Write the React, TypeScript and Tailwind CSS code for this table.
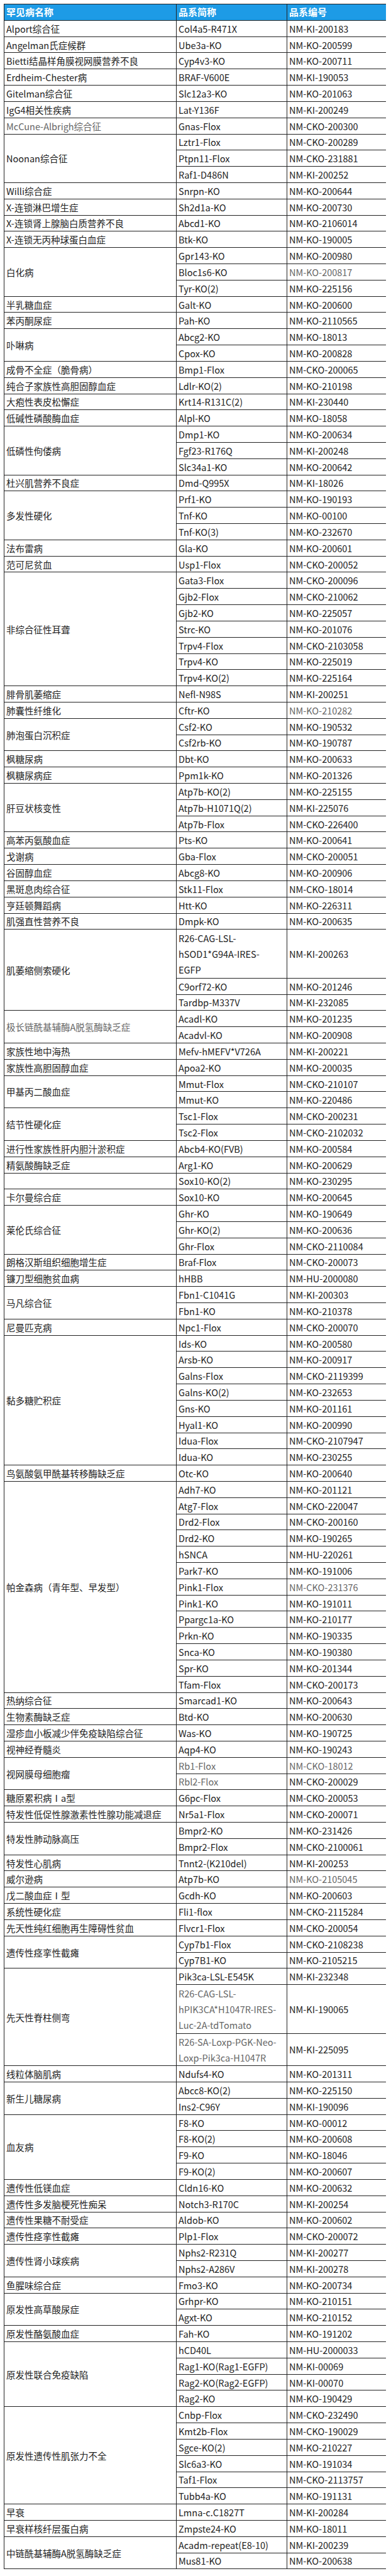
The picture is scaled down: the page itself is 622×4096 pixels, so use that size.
import React from "react";

// "~" at the start of a text marks the lighter grey print seen in the source sheet
type Strain = [string, string, number?];
type Group = { name: string; items: Strain[] };

const groups: Group[] = [
  { name: "Alport综合征", items: [["Col4a5-R471X", "NM-KI-200183"]] },
  { name: "Angelman氏症候群", items: [["Ube3a-KO", "NM-KO-200599"]] },
  { name: "Bietti结晶样角膜视网膜营养不良", items: [["Cyp4v3-KO", "NM-KO-200711"]] },
  { name: "Erdheim-Chester病", items: [["BRAF-V600E", "NM-KI-190053"]] },
  { name: "Gitelman综合征", items: [["Slc12a3-KO", "NM-KO-201063"]] },
  { name: "IgG4相关性疾病", items: [["Lat-Y136F", "NM-KI-200249"]] },
  { name: "~McCune-Albrigh综合征", items: [["Gnas-Flox", "NM-CKO-200300"]] },
  {
    name: "Noonan综合征",
    items: [
      ["Lztr1-Flox", "NM-CKO-200289"],
      ["Ptpn11-Flox", "NM-CKO-231881"],
      ["Raf1-D486N", "NM-KI-200252"],
    ],
  },
  { name: "Willi综合症", items: [["Snrpn-KO", "NM-KO-200644"]] },
  { name: "X-连锁淋巴增生症", items: [["Sh2d1a-KO", "NM-KO-200730"]] },
  { name: "X-连锁肾上腺脑白质营养不良", items: [["Abcd1-KO", "NM-KO-2106014"]] },
  { name: "X-连锁无丙种球蛋白血症", items: [["Btk-KO", "NM-KO-190005"]] },
  {
    name: "白化病",
    items: [
      ["Gpr143-KO", "NM-KO-200980"],
      ["Bloc1s6-KO", "~NM-KO-200817"],
      ["Tyr-KO(2)", "NM-KO-225156"],
    ],
  },
  { name: "半乳糖血症", items: [["Galt-KO", "NM-KO-200600"]] },
  { name: "苯丙酮尿症", items: [["Pah-KO", "NM-KO-2110565"]] },
  {
    name: "卟啉病",
    items: [
      ["Abcg2-KO", "NM-KO-18013"],
      ["Cpox-KO", "NM-KO-200828"],
    ],
  },
  { name: "成骨不全症（脆骨病）", items: [["Bmp1-Flox", "NM-CKO-200065"]] },
  { name: "纯合子家族性高胆固醇血症", items: [["Ldlr-KO(2)", "NM-KO-210198"]] },
  { name: "大疱性表皮松懈症", items: [["Krt14-R131C(2)", "NM-KI-230440"]] },
  { name: "低碱性磷酸酶血症", items: [["Alpl-KO", "NM-KO-18058"]] },
  {
    name: "低磷性佝偻病",
    items: [
      ["Dmp1-KO", "NM-KO-200634"],
      ["Fgf23-R176Q", "NM-KI-200248"],
      ["Slc34a1-KO", "NM-KO-200642"],
    ],
  },
  { name: "杜兴肌营养不良症", items: [["Dmd-Q995X", "NM-KI-18026"]] },
  {
    name: "多发性硬化",
    items: [
      ["Prf1-KO", "NM-KO-190193"],
      ["Tnf-KO", "NM-KO-00100"],
      ["Tnf-KO(3)", "NM-KO-232670"],
    ],
  },
  { name: "法布雷病", items: [["Gla-KO", "NM-KO-200601"]] },
  { name: "范可尼贫血", items: [["Usp1-Flox", "NM-CKO-200052"]] },
  {
    name: "非综合征性耳聋",
    items: [
      ["Gata3-Flox", "NM-CKO-200096"],
      ["Gjb2-Flox", "NM-CKO-210062"],
      ["Gjb2-KO", "NM-KO-225057"],
      ["Strc-KO", "NM-KO-201076"],
      ["Trpv4-Flox", "NM-CKO-2103058"],
      ["Trpv4-KO", "NM-KO-225019"],
      ["Trpv4-KO(2)", "NM-KO-225164"],
    ],
  },
  { name: "腓骨肌萎缩症", items: [["Nefl-N98S", "NM-KI-200251"]] },
  { name: "肺囊性纤维化", items: [["Cftr-KO", "~NM-KO-210282"]] },
  {
    name: "肺泡蛋白沉积症",
    items: [
      ["Csf2-KO", "NM-KO-190532"],
      ["Csf2rb-KO", "NM-KO-190787"],
    ],
  },
  { name: "枫糖尿病", items: [["Dbt-KO", "NM-KO-200633"]] },
  { name: "枫糖尿病症", items: [["Ppm1k-KO", "NM-KO-201326"]] },
  {
    name: "肝豆状核变性",
    items: [
      ["Atp7b-KO(2)", "NM-KO-225155"],
      ["Atp7b-H1071Q(2)", "NM-KI-225076"],
      ["Atp7b-Flox", "NM-CKO-226400"],
    ],
  },
  { name: "高苯丙氨酸血症", items: [["Pts-KO", "NM-KO-200641"]] },
  { name: "戈谢病", items: [["Gba-Flox", "NM-CKO-200051"]] },
  { name: "谷固醇血症", items: [["Abcg8-KO", "NM-KO-200906"]] },
  { name: "黑斑息肉综合征", items: [["Stk11-Flox", "NM-CKO-18014"]] },
  { name: "亨廷顿舞蹈病", items: [["Htt-KO", "NM-KO-226311"]] },
  { name: "肌强直性营养不良", items: [["Dmpk-KO", "NM-KO-200635"]] },
  {
    name: "肌萎缩侧索硬化",
    items: [
      ["R26-CAG-LSL-\nhSOD1*G94A-IRES-\nEGFP", "NM-KI-200263", 3],
      ["C9orf72-KO", "NM-KO-201246"],
      ["Tardbp-M337V", "NM-KI-232085"],
    ],
  },
  {
    name: "~极长链酰基辅酶A脱氢酶缺乏症",
    items: [
      ["Acadl-KO", "NM-KO-201235"],
      ["Acadvl-KO", "NM-KO-200908"],
    ],
  },
  { name: "家族性地中海热", items: [["Mefv-hMEFV*V726A", "NM-KI-200221"]] },
  { name: "家族性高胆固醇血症", items: [["Apoa2-KO", "NM-KO-200035"]] },
  {
    name: "甲基丙二酸血症",
    items: [
      ["Mmut-Flox", "NM-CKO-210107"],
      ["Mmut-KO", "NM-KO-220486"],
    ],
  },
  {
    name: "结节性硬化症",
    items: [
      ["Tsc1-Flox", "NM-CKO-200231"],
      ["Tsc2-Flox", "NM-CKO-2102032"],
    ],
  },
  { name: "进行性家族性肝内胆汁淤积症", items: [["Abcb4-KO(FVB)", "NM-KO-200584"]] },
  { name: "精氨酸酶缺乏症", items: [["Arg1-KO", "NM-KO-200629"]] },
  { name: "", items: [["Sox10-KO(2)", "NM-KO-230295"]] },
  { name: "卡尔曼综合症", items: [["Sox10-KO", "NM-KO-200645"]] },
  {
    name: "莱伦氏综合征",
    items: [
      ["Ghr-KO", "NM-KO-190649"],
      ["Ghr-KO(2)", "NM-KO-200636"],
      ["Ghr-Flox", "NM-CKO-2110084"],
    ],
  },
  { name: "朗格汉斯组织细胞增生症", items: [["Braf-Flox", "NM-CKO-200073"]] },
  { name: "镰刀型细胞贫血病", items: [["hHBB", "NM-HU-2000080"]] },
  {
    name: "马凡综合征",
    items: [
      ["Fbn1-C1041G", "NM-KI-200303"],
      ["Fbn1-KO", "NM-KO-210378"],
    ],
  },
  { name: "尼曼匹克病", items: [["Npc1-Flox", "NM-CKO-200070"]] },
  {
    name: "黏多糖贮积症",
    items: [
      ["Ids-KO", "NM-KO-200580"],
      ["Arsb-KO", "NM-KO-200917"],
      ["Galns-Flox", "NM-CKO-2119399"],
      ["Galns-KO(2)", "NM-KO-232653"],
      ["Gns-KO", "NM-KO-201161"],
      ["Hyal1-KO", "NM-KO-200990"],
      ["Idua-Flox", "NM-CKO-2107947"],
      ["Idua-KO", "NM-KO-230255"],
    ],
  },
  { name: "鸟氨酸氨甲酰基转移酶缺乏症", items: [["Otc-KO", "NM-KO-200640"]] },
  {
    name: "帕金森病（青年型、早发型）",
    items: [
      ["Adh7-KO", "NM-KO-201121"],
      ["Atg7-Flox", "NM-CKO-220047"],
      ["Drd2-Flox", "NM-CKO-200160"],
      ["Drd2-KO", "NM-KO-190265"],
      ["hSNCA", "NM-HU-220261"],
      ["Park7-KO", "NM-KO-191006"],
      ["Pink1-Flox", "~NM-CKO-231376"],
      ["Pink1-KO", "NM-KO-191011"],
      ["Ppargc1a-KO", "NM-KO-210177"],
      ["Prkn-KO", "NM-KO-190335"],
      ["Snca-KO", "NM-KO-190380"],
      ["Spr-KO", "NM-KO-201344"],
      ["Tfam-Flox", "NM-CKO-200173"],
    ],
  },
  { name: "热纳综合征", items: [["Smarcad1-KO", "NM-KO-200643"]] },
  { name: "生物素酶缺乏症", items: [["Btd-KO", "NM-KO-200630"]] },
  { name: "湿疹血小板减少伴免疫缺陷综合征", items: [["Was-KO", "NM-KO-190725"]] },
  { name: "视神经脊髓炎", items: [["Aqp4-KO", "NM-KO-190243"]] },
  {
    name: "视网膜母细胞瘤",
    items: [
      ["~Rb1-Flox", "~NM-CKO-18012"],
      ["~Rbl2-Flox", "NM-CKO-200029"],
    ],
  },
  { name: "糖原累积病Ⅰa型", items: [["G6pc-Flox", "NM-CKO-200053"]] },
  { name: "特发性低促性腺激素性性腺功能减退症", items: [["Nr5a1-Flox", "NM-CKO-200071"]] },
  {
    name: "特发性肺动脉高压",
    items: [
      ["Bmpr2-KO", "NM-KO-231426"],
      ["Bmpr2-Flox", "NM-CKO-2100061"],
    ],
  },
  { name: "特发性心肌病", items: [["Tnnt2-(K210del)", "NM-KI-200253"]] },
  { name: "威尔逊病", items: [["Atp7b-KO", "~NM-KO-2105045"]] },
  { name: "戊二酸血症Ⅰ型", items: [["Gcdh-KO", "NM-KO-200603"]] },
  { name: "系统性硬化症", items: [["Fli1-flox", "NM-CKO-2115284"]] },
  { name: "先天性纯红细胞再生障碍性贫血", items: [["Flvcr1-Flox", "NM-CKO-200054"]] },
  {
    name: "遗传性痉挛性截瘫",
    items: [
      ["Cyp7b1-Flox", "NM-CKO-2108238"],
      ["Cyp7B1-KO", "NM-KO-2105215"],
    ],
  },
  {
    name: "先天性脊柱侧弯",
    items: [
      ["Pik3ca-LSL-E545K", "NM-KI-232348"],
      ["~R26-CAG-LSL-\nhPIK3CA*H1047R-IRES-\nLuc-2A-tdTomato", "NM-KI-190065", 3],
      ["~R26-SA-Loxp-PGK-Neo-\nLoxp-Pik3ca-H1047R", "NM-KI-225095", 2],
    ],
  },
  { name: "线粒体脑肌病", items: [["Ndufs4-KO", "NM-KO-201311"]] },
  {
    name: "新生儿糖尿病",
    items: [
      ["Abcc8-KO(2)", "NM-KO-225150"],
      ["Ins2-C96Y", "NM-KI-190096"],
    ],
  },
  {
    name: "血友病",
    items: [
      ["F8-KO", "NM-KO-00012"],
      ["F8-KO(2)", "NM-KO-200608"],
      ["F9-KO", "NM-KO-18046"],
      ["F9-KO(2)", "NM-KO-200607"],
    ],
  },
  { name: "遗传性低镁血症", items: [["Cldn16-KO", "NM-KO-200632"]] },
  { name: "遗传性多发脑梗死性痴呆", items: [["Notch3-R170C", "NM-KI-200254"]] },
  { name: "遗传性果糖不耐受症", items: [["Aldob-KO", "NM-KO-200602"]] },
  { name: "遗传性痉挛性截瘫", items: [["Plp1-Flox", "NM-CKO-200072"]] },
  {
    name: "遗传性肾小球疾病",
    items: [
      ["Nphs2-R231Q", "NM-KI-200277"],
      ["Nphs2-A286V", "NM-KI-200278"],
    ],
  },
  { name: "鱼腥味综合症", items: [["Fmo3-KO", "NM-KO-200734"]] },
  {
    name: "原发性高草酸尿症",
    items: [
      ["Grhpr-KO", "NM-KO-210151"],
      ["Agxt-KO", "NM-KO-210152"],
    ],
  },
  { name: "原发性酪氨酸血症", items: [["Fah-KO", "NM-KO-191202"]] },
  {
    name: "原发性联合免疫缺陷",
    items: [
      ["hCD40L", "NM-HU-2000033"],
      ["Rag1-KO(Rag1-EGFP)", "NM-KI-00069"],
      ["Rag2-KO(Rag2-EGFP)", "NM-KI-00070"],
      ["Rag2-KO", "NM-KO-190429"],
    ],
  },
  {
    name: "原发性遗传性肌张力不全",
    items: [
      ["Cnbp-Flox", "NM-CKO-232490"],
      ["Kmt2b-Flox", "NM-CKO-190029"],
      ["Sgce-KO(2)", "NM-KO-210227"],
      ["Slc6a3-KO", "NM-KO-191034"],
      ["Taf1-Flox", "NM-CKO-2113757"],
      ["Tubb4a-KO", "NM-KO-191131"],
    ],
  },
  { name: "早衰", items: [["Lmna-c.C1827T", "NM-KI-200284"]] },
  { name: "早衰样核纤层蛋白病", items: [["Zmpste24-KO", "NM-KO-18011"]] },
  {
    name: "中链酰基辅酶A脱氢酶缺乏症",
    items: [
      ["Acadm-repeat(E8-10)", "NM-KI-200239"],
      ["Mus81-KO", "NM-KO-200638"],
    ],
  },
];

const cell = "bg-white flex items-center px-[3px] leading-[25px] whitespace-pre-line";
const head = "row-start-1 flex items-center bg-[#1d9be6] px-[3px] text-[15px] font-bold text-white";

function Text({ value }: { value: string }) {
  if (value.startsWith("~")) return <span className="text-[#666]">{value.slice(1)}</span>;
  return <>{value}</>;
}

export default function App() {
  // grid lines come from a running counter over the data; line 1 is the blue header
  let line = 2;
  const cells: React.ReactNode[] = [];
  groups.forEach((g, gi) => {
    const total = g.items.reduce((n, it) => n + (it[2] ?? 1), 0);
    cells.push(
      <div key={`d${gi}`} className={cell + " col-start-1"} style={{ gridRow: `${line} / span ${total}` }}>
        <Text value={g.name} />
      </div>
    );
    g.items.forEach(([strain, code, units = 1], i) => {
      const row = { gridRow: `${line} / span ${units}` };
      cells.push(
        <div key={`s${gi}-${i}`} className={cell + " col-start-2"} style={row}>
          <Text value={strain} />
        </div>,
        <div key={`c${gi}-${i}`} className={cell + " col-start-3"} style={row}>
          <Text value={code} />
        </div>
      );
      line += units;
    });
  });

  return (
    <div className="w-[622px] min-h-[4096px] bg-white pt-[6px] pl-[6px] text-[#222] font-['Noto_Sans_CJK_SC','Noto_Sans',sans-serif]">
      <div className="grid w-[608px] grid-cols-[273px_175px_157px] auto-rows-[24.82px] gap-px bg-[#222] p-px text-[14.5px]">
        <div className={head + " col-start-1"}>罕见病名称</div>
        <div className={head + " col-start-2"}>品系简称</div>
        <div className={head + " col-start-3"}>品系编号</div>
        {cells}
      </div>
    </div>
  );
}
